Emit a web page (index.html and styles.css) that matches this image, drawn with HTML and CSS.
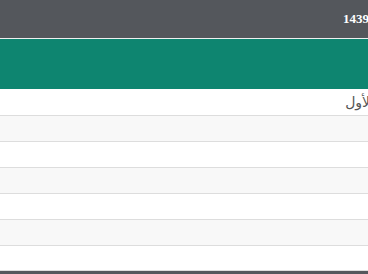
FILE: index.html
```html
<!DOCTYPE html>
<html lang="ar">
<head>
<meta charset="utf-8">
<link rel="stylesheet" href="styles.css">
</head>
<body>
<div class="page">
  <header class="topbar">
    <span class="date">1439</span>
  </header>
  <div class="banner"></div>
  <div class="table">
    <div class="row first"><span class="cell">الأول</span></div>
    <div class="row alt"></div>
    <div class="row"></div>
    <div class="row alt"></div>
    <div class="row"></div>
    <div class="row alt"></div>
    <div class="row last"></div>
  </div>
  <footer class="footer"></footer>
</div>
</body>
</html>
```

FILE: styles.css
```css
html, body {
  margin: 0;
  padding: 0;
  width: 368px;
  height: 274px;
  overflow: hidden;
  background: #fff;
}
.page {
  width: 368px;
  font-family: "DejaVu Sans", sans-serif;
}
.topbar {
  box-sizing: border-box;
  height: 39px;
  background: #54575c;
  border-bottom: 1px solid #eef0f0;
  display: flex;
  justify-content: flex-end;
  align-items: center;
}
.date {
  font-family: "Liberation Serif", serif;
  font-weight: bold;
  font-size: 13px;
  color: #fff;
  margin-right: -1px;
  margin-top: -1px;
}
.banner {
  height: 50px;
  background: #0e8570;
}
.row {
  height: 25px;
  border-bottom: 1px solid #dddddd;
  display: flex;
  justify-content: flex-start;
  align-items: center;
  direction: rtl;
}
.row.first {
  height: 26px;
}
.row.last {
  height: 24px;
}
.row.alt {
  background: #f8f8f8;
}
.cell {
  font-size: 14px;
  color: #555;
  margin-right: -6px;
  white-space: nowrap;
}
.footer {
  height: 6px;
  background: #54575c;
}
```
